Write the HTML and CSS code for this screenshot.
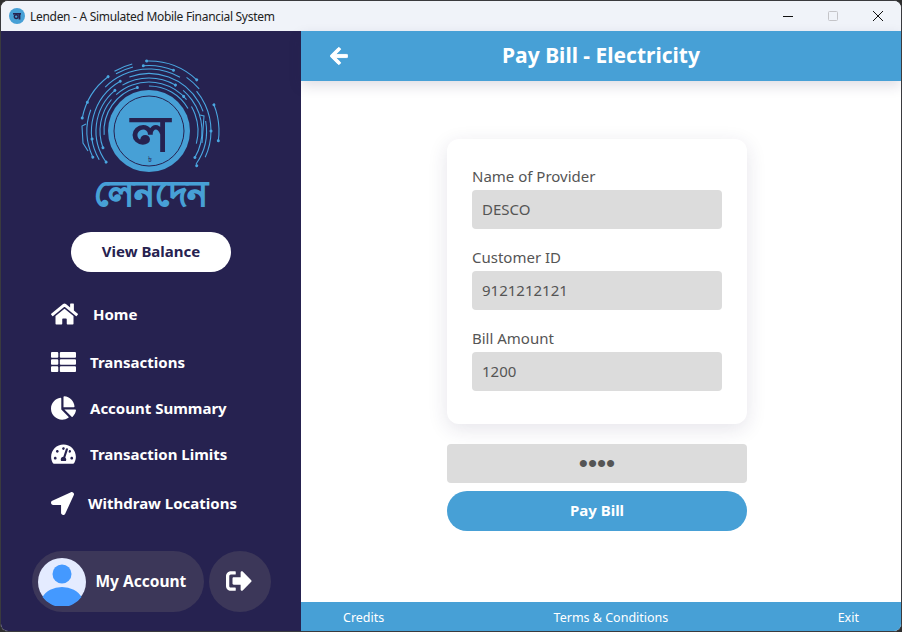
FILE: index.html
```html
<!DOCTYPE html>
<html>
  <head>
    <title>Lenden</title>
    <meta name="viewport" content="width=device-width, initial-scale=1" />
    <link rel="stylesheet" href="styles.css">
  </head>
  <body>
    <div class="window">
      <div class="titlebar">
        <svg class="app-icon" viewBox="0 0 16 16">
          <circle cx="8" cy="8" r="8" fill="#47a0d6" />
          <rect x="4" y="5" width="8" height="1.6" fill="#262250" />
          <rect x="9.6" y="5" width="1.8" height="6.5" fill="#262250" />
          <circle cx="7.2" cy="8.6" r="1.9" fill="none" stroke="#262250" stroke-width="1.4" />
        </svg>
        <span class="app-title">Lenden - A Simulated Mobile Financial System</span>
        <div class="win-buttons">
          <svg viewBox="0 0 10 10"><path d="M0 5.5h10" stroke="#111" fill="none" /></svg>
          <svg viewBox="0 0 10 10"><rect x=".5" y=".5" width="9" height="9" rx="1" stroke="#c4c4c8" fill="none" /></svg>
          <svg viewBox="0 0 10 10"><path d="M0 0l10 10M10 0L0 10" stroke="#111" fill="none" /></svg>
        </div>
      </div>

      <div class="app">
        <aside class="sidebar">
          <svg class="logo" viewBox="0 0 160 122">
            <!-- dash lengths are degrees of arc (pathLength=360) -->
            <g class="arcs">
              <circle cx="78" cy="76" r="70" pathLength="360" stroke-dasharray="45 25 30 360" transform="rotate(268 78 76)" />
              <circle cx="78" cy="76" r="69" pathLength="360" stroke-dasharray="16 360" transform="rotate(240 78 76)" />
              <circle cx="78" cy="76" r="66" pathLength="360" stroke-dasharray="16 360" transform="rotate(240 78 76)" />
              <circle cx="78" cy="76" r="68" pathLength="360" stroke-dasharray="42 360" transform="rotate(191 78 76)" />
              <circle cx="78" cy="76" r="65.500" pathLength="360" stroke-dasharray="27 13 15 360" transform="rotate(265 78 76)" />
              <circle cx="78" cy="76" r="62" pathLength="360" stroke-dasharray="45 25 75 20 65 360" transform="rotate(155 78 76)" />
              <circle cx="78" cy="76" r="57.500" pathLength="360" stroke-dasharray="90 10 90 10 45 360" transform="rotate(150 78 76)" />
              <circle cx="78" cy="76" r="53" pathLength="360" stroke-dasharray="86 10 60 10 80 360" transform="rotate(144 78 76)" />
              <circle cx="78" cy="76" r="49" pathLength="360" stroke-dasharray="60 8 92 10 45 360" transform="rotate(160 78 76)" />
              <circle cx="78" cy="76" r="45" pathLength="360" stroke-dasharray="80 15 60 360" transform="rotate(175 78 76)" />
              <path d="M15 69L11 71L12 88L17 96M129 60L133 61L131 88" />
            </g>
            <g class="dots">
              <circle cx="148" cy="76" r="1.500" transform="rotate(268 78 76)" />
              <circle cx="148" cy="76" r="1.500" transform="rotate(313 78 76)" />
              <circle cx="148" cy="76" r="1.500" transform="rotate(338 78 76)" />
              <circle cx="143.500" cy="76" r="1.500" transform="rotate(265 78 76)" />
              <circle cx="143.500" cy="76" r="1.500" transform="rotate(292 78 76)" />
              <circle cx="146" cy="76" r="1.500" transform="rotate(233 78 76)" />
              <circle cx="146" cy="76" r="1.500" transform="rotate(191 78 76)" />
              <circle cx="146" cy="76" r="1.500" transform="rotate(205 78 76)" />
              <circle cx="140" cy="76" r="1.500" transform="rotate(155 78 76)" />
              <circle cx="135.500" cy="76" r="1.500" transform="rotate(172 78 76)" />
              <circle cx="135.500" cy="76" r="1.500" transform="rotate(240 78 76)" />
              <circle cx="131" cy="76" r="1.500" transform="rotate(144 78 76)" />
              <circle cx="131" cy="76" r="1.500" transform="rotate(230 78 76)" />
              <circle cx="131" cy="76" r="1.500" transform="rotate(300 78 76)" />
              <circle cx="127" cy="76" r="1.500" transform="rotate(160 78 76)" />
              <circle cx="127" cy="76" r="1.500" transform="rotate(315 78 76)" />
              <circle cx="123" cy="76" r="1.500" transform="rotate(255 78 76)" />
              <circle cx="137" cy="76" r="1.500" transform="rotate(36 78 76)" />
              <circle cx="131" cy="76" r="1.500" transform="rotate(30 78 76)" />
              <circle cx="148" cy="76" r="1.500" transform="rotate(8 78 76)" />
              <circle cx="140" cy="76" r="1.500" transform="rotate(0 78 76)" />
            </g>
            <circle cx="78" cy="76" r="41" fill="#47a0d6" />
            <circle cx="78" cy="76" r="35" fill="none" stroke="#262250" stroke-width="1" />
            <text class="logo-mark" transform="translate(79 96) scale(1.05 1)">ল</text>
            <text class="logo-taka" x="79" y="107">৳</text>
          </svg>
          <div class="wordmark">লেনদেন</div>

          <button class="balance-btn" type="button">View Balance</button>

          <nav class="nav">
            <a class="nav-item nav-home">
              <svg class="icon-home" viewBox="0 0 576 512"><path d="M280.37 148.26L96 300.11V464a16 16 0 0 0 16 16l112.06-.29a16 16 0 0 0 15.92-16V368a16 16 0 0 1 16-16h64a16 16 0 0 1 16 16v95.64a16 16 0 0 0 16 16.05L464 480a16 16 0 0 0 16-16V300L295.67 148.26a12.19 12.19 0 0 0-15.3 0zM571.6 251.47L488 182.56V44.05a12 12 0 0 0-12-12h-56a12 12 0 0 0-12 12v72.61L318.47 43a48 48 0 0 0-61 0L4.34 251.47a12 12 0 0 0-1.6 16.9l25.5 31A12 12 0 0 0 45.15 301l235.22-193.74a12.19 12.19 0 0 1 15.3 0L530.9 301a12 12 0 0 0 16.9-1.6l25.5-31a12 12 0 0 0-1.7-16.93z" /></svg>
              <span>Home</span>
            </a>
            <a class="nav-item">
              <svg class="icon-list" viewBox="0 32 512 448" preserveAspectRatio="none"><path d="M149.333 216v80c0 13.255-10.745 24-24 24H24c-13.255 0-24-10.745-24-24v-80c0-13.255 10.745-24 24-24h101.333c13.255 0 24 10.745 24 24zM0 376v80c0 13.255 10.745 24 24 24h101.333c13.255 0 24-10.745 24-24v-80c0-13.255-10.745-24-24-24H24c-13.255 0-24 10.745-24 24zM125.333 32H24C10.745 32 0 42.745 0 56v80c0 13.255 10.745 24 24 24h101.333c13.255 0 24-10.745 24-24V56c0-13.255-10.745-24-24-24zm80 448H488c13.255 0 24-10.745 24-24v-80c0-13.255-10.745-24-24-24H205.333c-13.255 0-24 10.745-24 24v80c0 13.255 10.745 24 24 24zm-24-424v80c0 13.255 10.745 24 24 24H488c13.255 0 24-10.745 24-24V56c0-13.255-10.745-24-24-24H205.333c-13.255 0-24 10.745-24 24zm24 264H488c13.255 0 24-10.745 24-24v-80c0-13.255-10.745-24-24-24H205.333c-13.255 0-24 10.745-24 24v80c0 13.255 10.745 24 24 24z" /></svg>
              <span>Transactions</span>
            </a>
            <a class="nav-item">
              <svg class="icon-pie" viewBox="0 0 544 512"><path d="M527.79 288H290.5l158.03 158.03c6.04 6.04 15.98 6.53 22.19.68 38.7-36.46 65.32-85.61 73.13-140.86 1.34-9.46-6.51-17.85-16.06-17.85zm-15.83-64.8C503.72 103.74 408.26 8.28 288.8.04 279.68-.59 272 7.1 272 16.24V240h223.77c9.14 0 16.82-7.68 16.19-16.8zM224 288V50.71c0-9.55-8.39-17.4-17.84-16.06C86.99 51.49-4.1 155.6.14 280.37 4.5 408.51 114.83 513.59 243.03 511.98c50.4-.63 96.97-16.87 135.26-44.03 7.9-5.6 8.42-17.23 1.57-24.08L224 288z" /></svg>
              <span>Account Summary</span>
            </a>
            <a class="nav-item">
              <svg class="icon-gauge" viewBox="0 0 576 512"><path d="M288 32C128.94 32 0 160.94 0 320c0 52.8 14.25 102.26 39.06 144.8 5.61 9.62 16.3 15.2 27.44 15.2h443c11.14 0 21.83-5.58 27.44-15.2C561.75 422.26 576 372.8 576 320c0-159.06-128.94-288-288-288zm0 64c14.71 0 26.58 10.13 30.32 23.65-1.11 2.26-2.64 4.23-3.45 6.67l-9.22 27.67c-5.13 3.49-10.97 6.01-17.64 6.01-17.67 0-32-14.33-32-32S270.33 96 288 96zM96 384c-17.67 0-32-14.33-32-32s14.33-32 32-32 32 14.33 32 32-14.33 32-32 32zm48-160c-17.67 0-32-14.33-32-32s14.33-32 32-32 32 14.33 32 32-14.33 32-32 32zm246.77-72.41l-61.33 184C343.13 347.33 352 364.54 352 384c0 11.72-3.38 22.55-8.88 32H232.88c-5.5-9.45-8.88-20.28-8.88-32 0-33.94 26.5-61.43 59.9-63.59l61.34-184.01c4.17-12.56 17.73-19.45 30.36-15.17 12.57 4.19 19.35 17.79 15.17 30.36zm14.66 57.2l15.52-46.55c3.47-1.29 7.13-2.23 11.05-2.23 17.67 0 32 14.33 32 32s-14.33 32-32 32c-11.38-.01-20.89-6.28-26.57-15.22zM480 384c-17.67 0-32-14.33-32-32s14.33-32 32-32 32 14.33 32 32-14.33 32-32 32z" /></svg>
              <span>Transaction Limits</span>
            </a>
            <a class="nav-item nav-withdraw">
              <svg class="icon-arrow" viewBox="0 0 512 512"><path d="M444.52 3.52L28.74 195.42c-47.97 22.39-31.98 92.75 19.19 92.75h175.91v175.91c0 51.17 70.36 67.17 92.75 19.19l191.9-415.78c15.99-38.39-25.59-79.97-63.97-63.97z" /></svg>
              <span>Withdraw Locations</span>
            </a>
          </nav>

          <div class="account-row">
            <div class="account-pill">
              <svg class="avatar" viewBox="0 0 48 48">
                <circle cx="24" cy="24" r="24" fill="#e4ebff" />
                <circle cx="24" cy="16" r="9.5" fill="#4499ff" />
                <path d="M4.500 39a21 16 0 0 1 39 0a24 24 0 0 1-39 0z" fill="#4499ff" />
              </svg>
              <span>My Account</span>
            </div>
            <div class="logout-btn">
              <svg viewBox="0 0 512 512"><path d="M497 273L329 441c-15 15-41 4.5-41-17v-96H152c-13.3 0-24-10.7-24-24v-96c0-13.3 10.7-24 24-24h136V88c0-21.4 25.9-32 41-17l168 168c9.3 9.4 9.3 24.6 0 34zM192 436v-40c0-6.6-5.4-12-12-12H96c-17.7 0-32-14.3-32-32V160c0-17.7 14.3-32 32-32h84c6.6 0 12-5.4 12-12V76c0-6.6-5.4-12-12-12H96c-53 0-96 43-96 96v192c0 53 43 96 96 96h84c6.6 0 12-5.4 12-12z" /></svg>
            </div>
          </div>
        </aside>

        <main class="main">
          <header class="page-header">
            <svg class="back-icon" viewBox="0 0 448 512"><path d="M257.5 445.1l-22.2 22.2c-9.4 9.4-24.6 9.4-33.9 0L7 273c-9.4-9.4-9.4-24.6 0-33.9L201.4 44.7c9.4-9.4 24.6-9.4 33.9 0l22.2 22.2c9.5 9.5 9.3 25-.4 34.3L136.6 216H424c13.3 0 24 10.7 24 24v32c0 13.3-10.7 24-24 24H136.6l120.5 114.8c9.8 9.3 10 24.8.4 34.3z" /></svg>
            <h1>Pay Bill - Electricity</h1>
          </header>

          <section class="content">
            <form class="card">
              <label class="field-label" for="provider">Name of Provider</label>
              <input class="field-input" id="provider" type="text" value="DESCO" />
              <label class="field-label" for="customer">Customer ID</label>
              <input class="field-input" id="customer" type="text" value="9121212121" />
              <label class="field-label" for="amount">Bill Amount</label>
              <input class="field-input" id="amount" type="text" value="1200" />
            </form>
            <input class="pin-input" type="password" value="1234" />
            <button class="pay-btn" type="button">Pay Bill</button>
          </section>

          <footer class="footer">
            <span>Credits</span>
            <span>Terms &amp; Conditions</span>
            <span>Exit</span>
          </footer>
        </main>
      </div>
    </div>
  </body>
</html>
```

FILE: styles.css
```css
html, body {
  margin: 0;
  height: 100%;
  background-color: #2e2e2e;
  overflow: hidden;
}

body, input, button {
  font-family: "Noto Sans", "Open Sans", sans-serif;
}

.window {
  box-sizing: border-box;
  width: 902px;
  height: 632px;
  border: 1px solid #3a3a3e;
  border-radius: 8px;
  overflow: hidden;
  display: flex;
  flex-direction: column;
  background-color: white;
}

.titlebar {
  height: 30px;
  flex: none;
  display: flex;
  align-items: center;
  padding-left: 8px;
  background-color: #f0f3f9;
}

.app-icon {
  width: 16px;
  height: 16px;
  margin-right: 5px;
}

.app-title {
  font-size: 12px;
  letter-spacing: -0.3px;
  color: #222;
}

.win-buttons {
  margin-left: auto;
  display: flex;
  gap: 35px;
  padding-right: 18px;
}

.win-buttons svg {
  width: 10px;
  height: 10px;
}

.app {
  flex: 1;
  display: flex;
  min-height: 0;
}

.sidebar {
  width: 300px;
  flex: none;
  display: flex;
  flex-direction: column;
  align-items: center;
  background-color: #262250;
}

.logo {
  width: 160px;
  height: 122px;
  margin-top: 24px;
}

.arcs circle, .arcs path {
  fill: none;
  stroke: #4aa6e0;
  stroke-width: 1.1;
}

.dots circle {
  fill: #4aa6e0;
}

.logo-mark {
  font-size: 50px;
  text-anchor: middle;
  fill: #262250;
  stroke: #262250;
  stroke-width: 2px;
}

.logo-taka {
  font-size: 8px;
  text-anchor: middle;
  fill: #262250;
}

.wordmark {
  height: 38px;
  font-size: 35px;
  line-height: 32px;
  color: #47a0d6;
  -webkit-text-stroke: 2px #47a0d6;
}

.balance-btn {
  width: 160px;
  height: 40px;
  margin-top: 17px;
  padding: 0 0 2px;
  border: none;
  border-radius: 20px;
  background-color: white;
  color: #262250;
  font-size: 15px;
  font-weight: bold;
}

.nav {
  align-self: stretch;
  margin-top: 27px;
  padding-left: 50px;
  display: flex;
  flex-direction: column;
  gap: 16px;
}

.nav-item {
  height: 30px;
  display: flex;
  align-items: center;
  gap: 14px;
  color: white;
  font-size: 15px;
  font-weight: bold;
}

.nav-item svg {
  fill: white;
  flex: none;
}

.nav-home {
  gap: 15px;
  margin-bottom: 2px;
}

.nav-withdraw {
  gap: 14px;
  margin-top: 3px;
}

.icon-home { width: 27px; height: 24px; }
.icon-list { width: 25px; height: 20px; }
.icon-pie { width: 25px; height: 24px; }
.icon-gauge { width: 25px; height: 22px; }
.icon-arrow { width: 23px; height: 23px; }

.account-row {
  margin-top: auto;
  margin-bottom: 19px;
  display: flex;
  gap: 5px;
}

.account-pill {
  box-sizing: border-box;
  width: 172px;
  height: 61px;
  padding-left: 6px;
  display: flex;
  align-items: center;
  gap: 10px;
  border-radius: 31px;
  background-color: #3c3759;
  color: white;
  font-size: 15.5px;
  font-weight: bold;
}

.account-pill span {
  padding-bottom: 2px;
}

.avatar {
  width: 48px;
  height: 48px;
}

.logout-btn {
  box-sizing: border-box;
  width: 62px;
  height: 61px;
  padding: 0 2px 1px 0;
  display: flex;
  align-items: center;
  justify-content: center;
  border-radius: 50%;
  background-color: #3c3759;
}

.logout-btn svg {
  width: 26px;
  height: 26px;
  fill: white;
}

.main {
  flex: 1;
  min-width: 0;
  display: flex;
  flex-direction: column;
}

.page-header {
  position: relative;
  box-sizing: border-box;
  height: 50px;
  flex: none;
  padding-bottom: 2px;
  display: flex;
  align-items: center;
  justify-content: center;
  background-color: #47a0d6;
  box-shadow: 0 5px 12px rgba(38, 34, 80, 0.15);
}

.page-header h1 {
  margin: 0;
  color: white;
  font-size: 21px;
  font-weight: bold;
}

.back-icon {
  position: absolute;
  left: 29px;
  top: 15px;
  width: 18px;
  height: 20px;
  fill: white;
  stroke: white;
  stroke-width: 24px;
}

.content {
  flex: 1;
  display: flex;
  flex-direction: column;
  align-items: center;
  padding: 58px 8px 0 0;
}

.card {
  box-sizing: border-box;
  width: 300px;
  height: 285px;
  padding: 25px 25px 0;
  border-radius: 12px;
  background-color: white;
  box-shadow: 0 5px 20px rgba(38, 34, 80, 0.12);
}

.field-label {
  display: block;
  height: 26px;
  line-height: 24px;
  color: #555;
  font-size: 15px;
}

.field-input, .pin-input {
  box-sizing: border-box;
  display: block;
  height: 39px;
  border: none;
  border-radius: 4px;
  background-color: #dcdcdc;
  color: #555;
}

.field-input {
  width: 250px;
  margin-bottom: 16px;
  padding: 0 10px 2px;
  font-size: 15px;
}

.pin-input {
  width: 300px;
  margin-top: 20px;
  font-family: "Liberation Sans", sans-serif;
  font-size: 26px;
  text-align: center;
}

.pay-btn {
  width: 300px;
  height: 40px;
  margin-top: 8px;
  padding: 0 0 2px;
  border: none;
  border-radius: 20px;
  background-color: #47a0d6;
  color: white;
  font-size: 15px;
  font-weight: bold;
}

.footer {
  box-sizing: border-box;
  height: 29px;
  flex: none;
  padding: 1px 42px 0;
  display: flex;
  align-items: center;
  justify-content: space-between;
  background-color: #47a0d6;
  color: white;
  font-size: 12.5px;
}
```
